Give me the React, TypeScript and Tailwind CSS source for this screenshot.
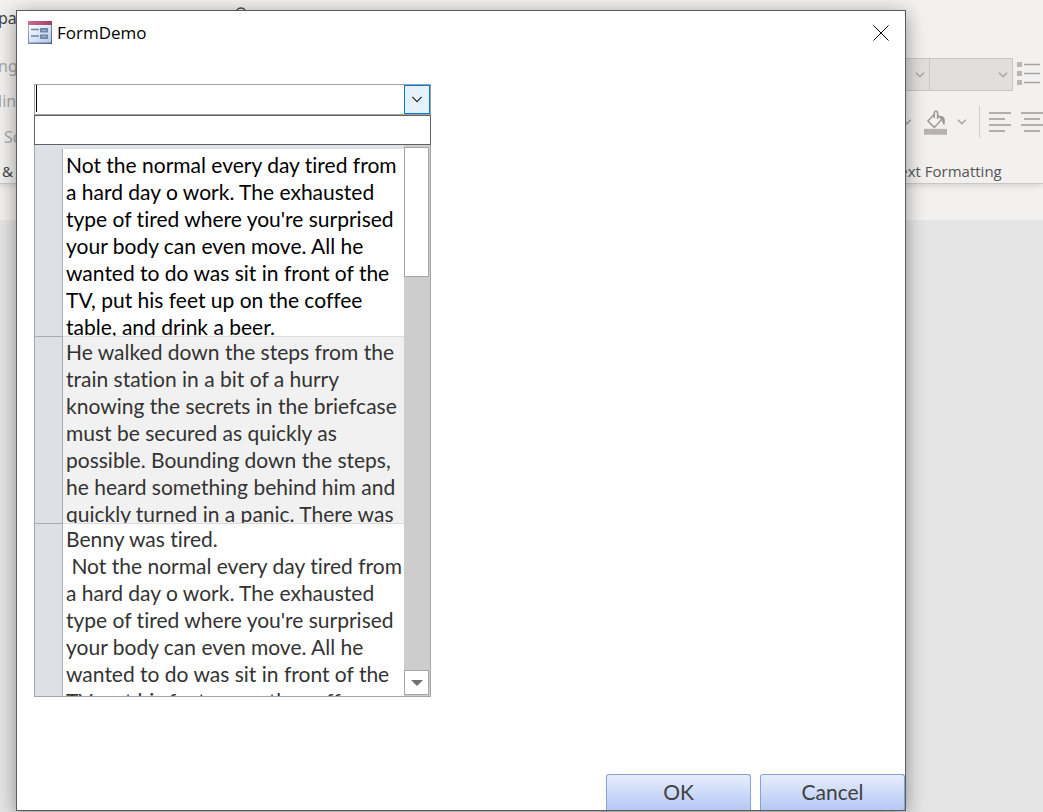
import type { ReactNode } from "react";

const rows = [
  {
    tone: "h-[188px] bg-white pt-0.5 text-black",
    lines: [
      "Not the normal every day tired from",
      "a hard day o work. The exhausted",
      "type of tired where you're surprised",
      "your body can even move. All he",
      "wanted to do was sit in front of the",
      "TV, put his feet up on the coffee",
      "table, and drink a beer.",
    ],
  },
  {
    tone: "h-[187px] bg-[#f1f1f1] pt-px text-[#333]",
    lines: [
      "He walked down the steps from the",
      "train station in a bit of a hurry",
      "knowing the secrets in the briefcase",
      "must be secured as quickly as",
      "possible. Bounding down the steps,",
      "he heard something behind him and",
      "quickly turned in a panic. There was",
    ],
  },
  {
    tone: "h-[187px] bg-white pt-px text-[#333]",
    lines: [
      "Benny was tired.",
      " Not the normal every day tired from",
      "a hard day o work. The exhausted",
      "type of tired where you're surprised",
      "your body can even move. All he",
      "wanted to do was sit in front of the",
      "TV, put his feet up on the coffee",
    ],
  },
];

function Chevron({ className }: { className: string }) {
  return (
    <svg viewBox="0 0 10 6" className={className} fill="none" stroke="currentColor">
      <path d="M1 0.8 5 4.8 9 0.8" />
    </svg>
  );
}

function FormIcon() {
  return (
    <svg viewBox="0 0 24 23" className="h-[23px] w-6" aria-hidden="true">
      <defs>
        <linearGradient id="form-bar" x1="0" x2="1">
          <stop offset="0" stopColor="#c96f8f" />
          <stop offset="1" stopColor="#a93b67" />
        </linearGradient>
        <linearGradient id="form-body" x1="0" y1="0" x2="1" y2="1">
          <stop offset="0" stopColor="#ffffff" />
          <stop offset="1" stopColor="#b5c8e6" />
        </linearGradient>
        <linearGradient id="form-edge" x1="0" y1="0" x2="1" y2="1">
          <stop offset="0" stopColor="#a9bad8" />
          <stop offset="1" stopColor="#4c5f85" />
        </linearGradient>
      </defs>
      <rect width="24" height="23" fill="url(#form-edge)" />
      <rect x="1" y="4" width="22" height="17.5" fill="url(#form-body)" />
      <rect width="24" height="4" fill="url(#form-bar)" />
      <path d="M3 8.500h8M3 15h8" stroke="#7086a9" strokeWidth="1.6" />
      <rect x="13" y="8" width="6" height="2.500" fill="#dce7f7" stroke="#7188ae" strokeWidth="2" />
      <rect x="13" y="14.500" width="6" height="2.500" fill="#dce7f7" stroke="#7188ae" strokeWidth="2" />
    </svg>
  );
}

function ActionButton({ children }: { children: ReactNode }) {
  return (
    <button
      type="button"
      className="h-9 w-[145px] rounded-t-[3px] border border-b-0 border-[#83a3e0] bg-gradient-to-b from-[#e7edfc] to-[#b5c8f4] pb-0.5 font-[Lato,sans-serif] text-[21px] leading-7 text-[#404040]"
    >
      {children}
    </button>
  );
}

function Ribbon() {
  return (
    <header className="relative border-b border-[#c8c8c8] bg-[#f2f1f0] shadow-[0_2px_6px_rgba(0,0,0,0.12)]">
      <div className="flex h-[183px] justify-between">
        <div className="w-[260px] pt-1 text-base leading-7 text-[#a9a9a9]">
          <div className="flex justify-between text-[#444]">
            <span className="-ml-0.5">pa</span>
            <svg viewBox="0 0 14 14" className="mt-[3px] mr-3 h-3.5 w-3.5" fill="none" stroke="currentColor" strokeWidth="1.3">
              <circle cx="7" cy="6.5" r="5.5" />
            </svg>
          </div>
          <div className="-ml-0.5 mt-5">ng</div>
          <div className="-ml-0.5 mt-[7px]">lin</div>
          <div className="mt-2 pl-1">Sc</div>
          <div className="mt-1.5 pl-0.5 text-[15px] text-[#444]">&amp;</div>
        </div>
        <div className="flex w-[164px] flex-col pt-[58px] text-[#a5a5a5]">
          <div className="flex h-[35px] items-start">
            <div className="flex h-full w-[51px] shrink-0 items-center justify-end border border-[#c6c6c6] bg-[#e0dfde] pr-1">
              <Chevron className="h-[6px] w-2.5 stroke-[1.5]" />
            </div>
            <div className="flex h-full w-[83px] shrink-0 items-center justify-end border border-l-0 border-[#c6c6c6] bg-[#e0dfde] pr-1">
              <Chevron className="h-[6px] w-2.5 stroke-[1.5]" />
            </div>
            <svg viewBox="0 0 24 24" className="mt-[3px] ml-1 h-6 w-6 shrink-0" aria-hidden="true">
              <path d="M0 1h5v5H0zM0 10h5v5H0zM0 19h5v5H0z" fill="#b9b7b4" />
              <path d="M7 3.500h16M7 12.500h16M7 21.500h16" stroke="#a5a5a5" strokeWidth="1.6" />
            </svg>
          </div>
          <div className="mt-[15px] flex h-8 items-center">
            <Chevron className="ml-[23px] h-[6px] w-2.5 stroke-[1.5]" />
            <svg viewBox="0 0 24 25" className="ml-3 h-[25px] w-6" fill="none" stroke="#999" aria-hidden="true">
              <path d="M11 3.500 4 11l6.500 6.500L18.500 9 14 5M10.500 8V3q0-2 1.700-2t1.700 2v6" strokeWidth="1.5" />
              <path d="M16.500 6.500h2.500q2.500 1 1.500 8-1.500-1-1.500-5z" fill="#999" />
              <path d="M0 19h24v6H0z" fill="#b7b2af" stroke="none" />
            </svg>
            <Chevron className="ml-[10px] h-[6px] w-2.5 stroke-[1.5]" />
            <span className="ml-3 h-8 w-px bg-[#cfcfcf]" />
            <svg viewBox="0 0 54 22" className="ml-[9px] h-[22px] w-[54px] shrink-0" stroke="#999" strokeWidth="1.6" aria-hidden="true">
              <path d="M0 2h22M0 8h16M0 14h22M0 20h16M32 2h22M35 8h16M32 14h22M35 20h16" />
            </svg>
          </div>
          <div className="mt-[21px] pl-3 font-['Open_Sans',sans-serif] text-[15px] leading-6 whitespace-nowrap text-[#555]">
            Text Formatting
          </div>
        </div>
      </div>
    </header>
  );
}

function ComboList() {
  return (
    <div className="w-[397px]">
      <div className="flex h-[31px] border border-[#a3a3a3] bg-white">
        <div className="flex min-w-0 flex-1 pb-0.5 pl-px">
          <input aria-label="Story" className="min-w-0 flex-1 border-l border-black text-lg outline-none" />
        </div>
        <button
          type="button"
          aria-label="Open list"
          className="flex w-[26px] items-center justify-center border border-[#0078d4] bg-[#e5f1fb] text-[#222]"
        >
          <Chevron className="h-[7px] w-3 stroke-1" />
        </button>
      </div>
      <div className="h-[30px] border border-[#606060] bg-white" />
      <div className="flex h-[552px] overflow-hidden border border-t-0 border-[#a6a6a6]">
        <div className="flex min-w-0 flex-1 flex-col bg-[#dfe2e8] pt-1">
          {rows.map((row, index) => (
            <div key={index} className="flex shrink-0">
              <div className="w-7 shrink-0 border-r border-b border-[#a9adb2] bg-[#dde1e6]" />
              <div
                className={`min-w-0 flex-1 overflow-hidden border-b border-[#dcdcdc] pl-[3px] font-[Lato,sans-serif] text-[21px] leading-[27px] whitespace-pre [font-variant-ligatures:none] ${row.tone}`}
              >
                {row.lines.map((line) => (
                  <div key={line}>{line}</div>
                ))}
              </div>
            </div>
          ))}
        </div>
        <div className="flex w-[26px] flex-col justify-between bg-[#cdcdcd] pt-0.5 pr-px pb-px">
          <div className="h-[130px] border border-[#a6a6a6] bg-white" />
          <button
            type="button"
            aria-label="Scroll down"
            className="flex h-[25px] items-center justify-center border border-[#a6a6a6] bg-white"
          >
            <svg viewBox="0 0 12 6" className="h-1.5 w-3" fill="#707070">
              <path d="M0 0h12L6 6z" />
            </svg>
          </button>
        </div>
      </div>
    </div>
  );
}

export default function App() {
  return (
    <main className="relative h-screen overflow-hidden bg-[#e5e5e5] font-['Noto_Sans','Open_Sans',sans-serif]">
      <Ribbon />
      <div className="h-9 bg-[#f2f1f0]" />
      <section
        role="dialog"
        aria-label="FormDemo"
        className="absolute top-2.5 right-[137px] bottom-px left-4 flex flex-col justify-between border border-[#5c5c5c] bg-white shadow-[0_4px_18px_rgba(0,0,0,0.4)]"
      >
        <div>
          <div className="flex h-[73px] items-start justify-between pt-1.5 pr-4 pl-[11px]">
            <div className="flex items-center gap-[5px]">
              <FormIcon />
              <h1 className="pt-0.5 font-['Open_Sans','Noto_Sans',sans-serif] text-[17px] leading-7 text-black">FormDemo</h1>
            </div>
            <button type="button" aria-label="Close" className="mt-2">
              <svg viewBox="0 0 16 16" className="h-4 w-4" stroke="#000">
                <path d="m.5.5 15 15M15.500.5l-15 15" />
              </svg>
            </button>
          </div>
          <div className="pl-[17px]">
            <ComboList />
          </div>
        </div>
        <div className="flex justify-end gap-[9px]">
          <ActionButton>OK</ActionButton>
          <ActionButton>Cancel</ActionButton>
        </div>
      </section>
    </main>
  );
}
